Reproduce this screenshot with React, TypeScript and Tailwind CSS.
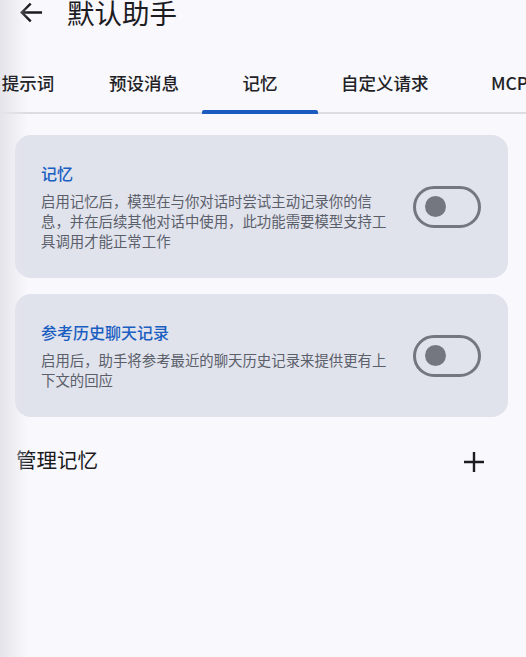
import { useState } from "react"

const tabs = ["提示词", "预设消息", "记忆", "自定义请求", "MCP"]

function Toggle({ on, onChange }: { on: boolean; onChange: () => void }) {
  return (
    <button
      onClick={onChange}
      className={`relative flex h-[42px] w-[68px] shrink-0 items-center rounded-full border-[3px] ${
        on ? "border-[#1b5ec2] bg-[#1b5ec2]" : "border-[#74777f] bg-transparent"
      }`}
    >
      <span
        className={`absolute h-[21px] w-[21px] rounded-full ${
          on ? "left-[33px] bg-white" : "left-[9px] bg-[#74777f]"
        }`}
      />
    </button>
  )
}

function SettingCard({ title, desc }: { title: string; desc: string }) {
  const [on, setOn] = useState(false)
  return (
    <div className="flex items-center justify-between rounded-[16px] bg-[#e0e2ec] pl-[26px] pr-[27px] pt-[27px] pb-[27px]">
      <div className="flex w-[350px] flex-col gap-[7px]">
        <div className="text-[16px] leading-[22px] font-medium text-[#1b5ec2]">{title}</div>
        <div className="text-[14.4px] leading-[20px] text-[#5b5f6a]">{desc}</div>
      </div>
      <Toggle on={on} onChange={() => setOn(!on)} />
    </div>
  )
}

export default function App() {
  const [active, setActive] = useState(2)

  return (
    <main
      className="relative min-h-[657px] w-full overflow-hidden bg-[#f8f8fd] text-[#1c1b1f]"
      style={{ fontFamily: '"Noto Sans CJK SC", "Noto Sans", sans-serif' }}
    >
      {/* edge shadow */}
      <div className="pointer-events-none absolute inset-y-0 left-0 w-[28px] bg-gradient-to-r from-[#e4e4ea] to-transparent" />

      {/* Header */}
      <header className="flex h-[25px] items-center gap-[21px] pl-[15px]">
        <svg width="31" height="31" viewBox="0 0 24 24" className="shrink-0">
          <path
            d="M20 12H5.5M11.5 5.8 5.3 12l6.2 6.2"
            fill="none"
            stroke="#1c1b1f"
            strokeWidth="1.9"
            strokeLinecap="square"
          />
        </svg>
        <h1 className="text-[27.5px] leading-[25px] font-normal">默认助手</h1>
      </header>

      {/* Tabs */}
      <nav className="mt-[33px] border-b-2 border-[#dcdce2]">
        <div className="-ml-[30px] flex">
          {tabs.map((t, i) => (
            <button
              key={t}
              onClick={() => setActive(i)}
              className="relative flex h-[54px] min-w-[116px] shrink-0 items-center justify-center px-[23px] pb-[4px] text-[17.5px] font-medium text-[#222226]"
            >
              {t}
              {active === i && (
                <span className="absolute -bottom-[2px] left-0 right-0 h-[4px] rounded-t-[2px] bg-[#1b5cc0]" />
              )}
            </button>
          ))}
        </div>
      </nav>

      {/* Content */}
      <section className="flex flex-col gap-[16px] px-[15px] pt-[21px] pr-[18px]">
        <SettingCard
          title="记忆"
          desc="启用记忆后，模型在与你对话时尝试主动记录你的信息，并在后续其他对话中使用，此功能需要模型支持工具调用才能正常工作"
        />
        <SettingCard
          title="参考历史聊天记录"
          desc="启用后，助手将参考最近的聊天历史记录来提供更有上下文的回应"
        />
      </section>

      <div className="flex items-center justify-between pl-[16px] pr-[40px] pt-[27px]">
        <h2 className="text-[20.5px] leading-[28px] font-normal">管理记忆</h2>
        <button className="mt-[6px]">
          <svg width="24" height="24" viewBox="0 0 24 24">
            <path d="M12 2v20M2 12h20" stroke="#1c1b1f" strokeWidth="2.4" />
          </svg>
        </button>
      </div>
    </main>
  )
}
